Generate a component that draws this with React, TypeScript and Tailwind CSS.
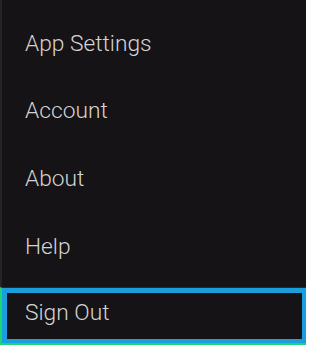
const items = ['App Settings', 'Account', 'About', 'Help']

export default function App() {
  return (
    <div
      className="w-[306px] h-[345px] bg-[#151315] flex flex-col overflow-hidden"
      style={{ fontFamily: '"Roboto Light", Roboto, "Liberation Sans", sans-serif' }}
    >
      {/* menu rows */}
      <div className="h-[287px] flex flex-col pt-[10px] border-l-2 border-[#252425]">
        {items.map((label) => (
          <div key={label} className="h-[67.67px] flex items-center pl-[23px]">
            <span className="text-[22.75px] font-light text-[#d4d4d4] leading-normal">{label}</span>
          </div>
        ))}
      </div>

      {/* focused item */}
      <div className="border-t border-l-2 border-b-2 border-t-[#103826] border-l-[#1bd672] border-b-[#1bd672]">
        <div className="h-[55px] border-t-[5px] border-l-[5px] border-r-4 border-b-4 border-[#1a9fdc] flex items-center pl-[18px] pb-[5px]">
          <span className="text-[22.75px] font-light text-[#d4d4d4] leading-normal">Sign Out</span>
        </div>
      </div>
    </div>
  )
}
